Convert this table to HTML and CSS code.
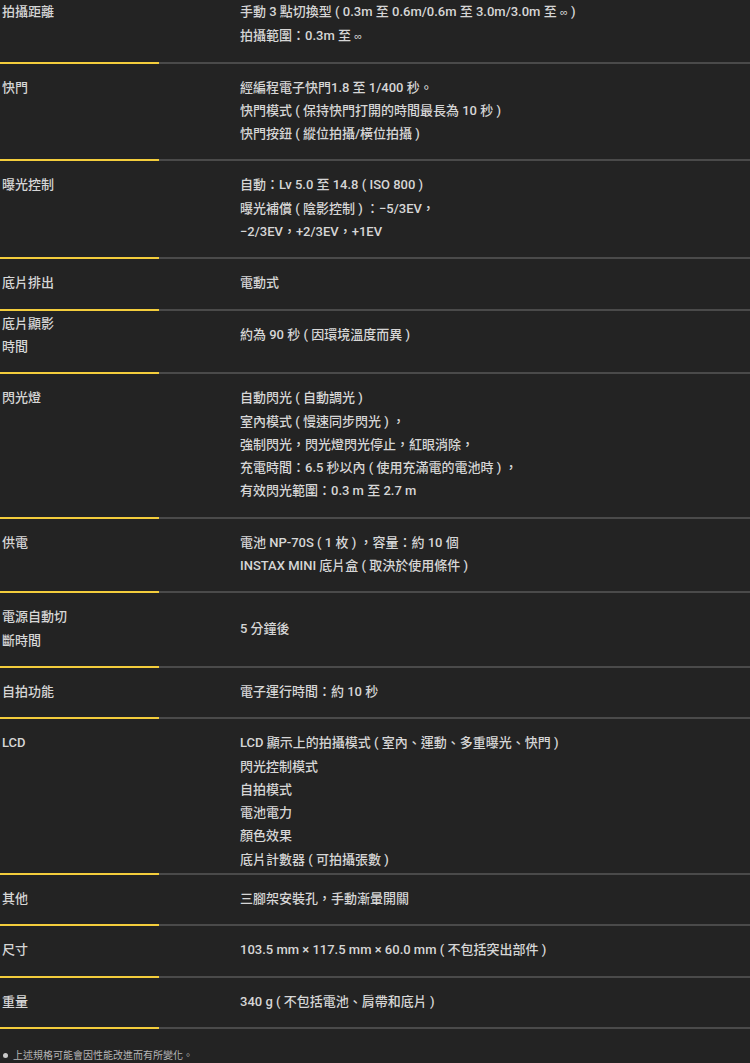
FILE: index.html
```html
<!DOCTYPE html>
<html lang="zh-Hant">
<head>
<meta charset="utf-8">
<title>規格</title>
<link rel="stylesheet" href="styles.css">
</head>
<body>
<div class="specs">
  <div class="row row-first">
    <div class="label">拍攝距離</div>
    <div class="value">手動 3 點切換型 ( 0.3m 至 0.6m/0.6m 至 3.0m/3.0m 至 <span class="inf">∞</span> )<br>拍攝範圍：0.3m 至 <span class="inf">∞</span></div>
  </div>
  <div class="row">
    <div class="label">快門</div>
    <div class="value">經編程電子快門1.8 至 1/400 秒。<br>快門模式 ( 保持快門打開的時間最長為 10 秒 )<br>快門按鈕 ( 縱位拍攝/橫位拍攝 )</div>
  </div>
  <div class="row">
    <div class="label">曝光控制</div>
    <div class="value">自動：Lv 5.0 至 14.8 ( ISO 800 )<br>曝光補償 ( 陰影控制 ) ：−5/3EV，<br>−2/3EV，+2/3EV，+1EV</div>
  </div>
  <div class="row">
    <div class="label">底片排出</div>
    <div class="value">電動式</div>
  </div>
  <div class="row row-center row-tight">
    <div class="label">底片顯影<br>時間</div>
    <div class="value">約為 90 秒 ( 因環境溫度而異 )</div>
  </div>
  <div class="row">
    <div class="label">閃光燈</div>
    <div class="value">自動閃光 ( 自動調光 )<br>室內模式 ( 慢速同步閃光 ) ，<br>強制閃光，閃光燈閃光停止，紅眼消除，<br>充電時間：6.5 秒以內 ( 使用充滿電的電池時 ) ，<br>有效閃光範圍：0.3 m 至 2.7 m</div>
  </div>
  <div class="row">
    <div class="label">供電</div>
    <div class="value">電池 NP-70S ( 1 枚 ) ，容量：約 10 個<br>INSTAX MINI 底片盒 ( 取決於使用條件 )</div>
  </div>
  <div class="row row-center">
    <div class="label">電源自動切<br>斷時間</div>
    <div class="value">5 分鐘後</div>
  </div>
  <div class="row">
    <div class="label">自拍功能</div>
    <div class="value">電子運行時間：約 10 秒</div>
  </div>
  <div class="row row-short">
    <div class="label">LCD</div>
    <div class="value">LCD 顯示上的拍攝模式 ( 室內、運動、多重曝光、快門 )<br>閃光控制模式<br>自拍模式<br>電池電力<br>顏色效果<br>底片計數器 ( 可拍攝張數 )</div>
  </div>
  <div class="row">
    <div class="label">其他</div>
    <div class="value">三腳架安裝孔，手動漸暈開關</div>
  </div>
  <div class="row">
    <div class="label">尺寸</div>
    <div class="value">103.5 mm × 117.5 mm × 60.0 mm ( 不包括突出部件 )</div>
  </div>
  <div class="row">
    <div class="label">重量</div>
    <div class="value">340 g ( 不包括電池、肩帶和底片 )</div>
  </div>
</div>
<ul class="notes">
  <li>上述規格可能會因性能改進而有所變化。</li>
</ul>
</body>
</html>
```
FILE: styles.css
```css
html, body {
  margin: 0;
  padding: 0;
  background: #232323;
}
body {
  font-family: Roboto, "Noto Sans CJK TC", sans-serif;
  font-size: 13px;
  font-weight: 500;
  color: #d6d6d6;
  width: 750px;
}
.specs {
  display: flex;
  flex-direction: column;
}
.row {
  display: grid;
  grid-template-columns: 240px 1fr;
  align-items: start;
  line-height: 23.3px;
  padding: 12px 0 14px;
  border-bottom: 2px solid #4a4a4a;
  border-image: linear-gradient(to right, #f3cd3c 0, #f3cd3c 160px, #4a4a4a 160px, #4a4a4a 100%) 1;
}
.row-first {
  padding-top: 0;
  padding-bottom: 13px;
}
.row-center {
  align-items: center;
}
.row-tight {
  padding-top: 1px;
}
.row-short {
  padding-bottom: 2px;
}
.label {
  padding-left: 2px;
}
.value {
  white-space: nowrap;
}
.inf {
  font-family: "Liberation Sans", sans-serif;
  font-size: 11px;
}
.notes {
  list-style: none;
  margin: 0;
  padding: 20px 0 0 3px;
  font-size: 10px;
  font-weight: 400;
  line-height: 14px;
  color: #b5b5b5;
}
.notes li {
  display: flex;
  align-items: center;
  gap: 5px;
}
.notes li::before {
  content: "";
  width: 5px;
  height: 5px;
  border-radius: 50%;
  background: #c8c8c8;
}
```
